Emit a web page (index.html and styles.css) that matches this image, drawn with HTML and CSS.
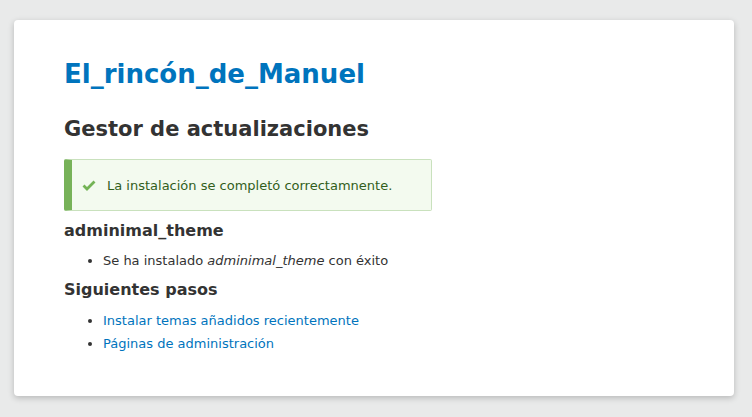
FILE: index.html
```html
<!DOCTYPE html>
<html lang="es">
<head>
<meta charset="utf-8">
<title>Gestor de actualizaciones</title>
<link rel="stylesheet" href="styles.css">
</head>
<body>
<div class="page">
  <main class="card">
    <a class="site-name" href="#">El_rincón_de_Manuel</a>
    <h1 class="page-title">Gestor de actualizaciones</h1>
    <div class="message">
      <svg class="check" width="14" height="11" viewBox="0 0 14 11"><path d="M1.5 5.5 L5 9 L12.5 1.5" fill="none" stroke="#73b355" stroke-width="2.8"/></svg>
      <span>La instalación se completó correctamnente.</span>
    </div>
    <h2 class="section">adminimal_theme</h2>
    <ul class="list">
      <li>Se ha instalado <em>adminimal_theme</em> con éxito</li>
    </ul>
    <h2 class="section section-next">Siguientes pasos</h2>
    <ul class="list links">
      <li><a href="#">Instalar temas añadidos recientemente</a></li>
      <li><a href="#">Páginas de administración</a></li>
    </ul>
  </main>
</div>
</body>
</html>
```
FILE: styles.css
```css
html, body {
  margin: 0;
  padding: 0;
}
body {
  background: #e9eaea;
  font-family: "DejaVu Sans", sans-serif;
  color: #333;
}
.page {
  padding: 20px 18px 21px 14px;
}
.card {
  display: flex;
  flex-direction: column;
  align-items: flex-start;
  background: #fff;
  border-radius: 4px;
  box-shadow: 0 2px 6px rgba(0,0,0,0.22);
  padding: 38px 50px 30px 50px;
  height: 308px;
}
.site-name {
  font-size: 26px;
  font-weight: bold;
  color: #0074bd;
  text-decoration: none;
  line-height: 32px;
}
.page-title {
  font-size: 21px;
  font-weight: bold;
  margin: 26px 0 0;
  line-height: 26px;
}
.message {
  display: flex;
  align-items: center;
  gap: 11px;
  box-sizing: border-box;
  width: 368px;
  height: 52px;
  margin-top: 17px;
  padding-left: 10px;
  background: #f3faef;
  border: 1px solid #c9e1bd;
  border-left: 8px solid #77b259;
  border-radius: 2px;
  color: #325e1c;
  font-size: 13px;
}
.section {
  font-size: 16px;
  font-weight: bold;
  margin: 9px 0 0;
  line-height: 22px;
}
.section-next {
  margin-top: 7px;
}
.list {
  margin: 7px 0 0;
  padding-left: 39px;
  font-size: 13px;
  line-height: 23px;
  list-style: disc;
}
.links {
  margin-top: 8px;
}
.list a {
  color: #0074bd;
  text-decoration: none;
}
```
